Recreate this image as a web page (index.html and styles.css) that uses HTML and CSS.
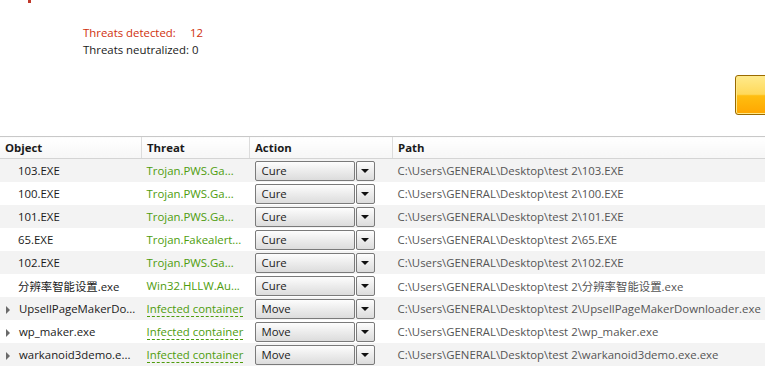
FILE: index.html
```html
<!DOCTYPE html>
<html lang="en">
<head>
    <meta charset="UTF-8">
    <meta name="viewport" content="width=device-width, initial-scale=1.0">
    <title>Scan Results</title>
    <link rel="stylesheet" href="styles.css">
</head>
<body>
    <div class="top">
        <div class="mark"></div>
        <div class="summary">
            <div class="stat alert"><span class="label">Threats detected:</span><span>12</span></div>
            <div class="stat"><span class="label">Threats neutralized:</span><span>0</span></div>
        </div>
        <div class="toolbar">
            <div class="big-button"></div>
        </div>
    </div>

    <table class="results">
        <thead>
            <tr>
                <th class="col-object">Object</th>
                <th class="col-threat">Threat</th>
                <th class="col-action">Action</th>
                <th class="col-path">Path</th>
            </tr>
        </thead>
        <tbody>
            <tr>
                <td class="obj">103.EXE</td>
                <td class="threat">Trojan.PWS.Ga...</td>
                <td><div class="combo"><span class="combo-value">Cure</span><span class="combo-arrow"></span></div></td>
                <td class="path">C:\Users\GENERAL\Desktop\test 2\103.EXE</td>
            </tr>
            <tr>
                <td class="obj">100.EXE</td>
                <td class="threat">Trojan.PWS.Ga...</td>
                <td><div class="combo"><span class="combo-value">Cure</span><span class="combo-arrow"></span></div></td>
                <td class="path">C:\Users\GENERAL\Desktop\test 2\100.EXE</td>
            </tr>
            <tr>
                <td class="obj">101.EXE</td>
                <td class="threat">Trojan.PWS.Ga...</td>
                <td><div class="combo"><span class="combo-value">Cure</span><span class="combo-arrow"></span></div></td>
                <td class="path">C:\Users\GENERAL\Desktop\test 2\101.EXE</td>
            </tr>
            <tr>
                <td class="obj">65.EXE</td>
                <td class="threat">Trojan.Fakealert...</td>
                <td><div class="combo"><span class="combo-value">Cure</span><span class="combo-arrow"></span></div></td>
                <td class="path">C:\Users\GENERAL\Desktop\test 2\65.EXE</td>
            </tr>
            <tr>
                <td class="obj">102.EXE</td>
                <td class="threat">Trojan.PWS.Ga...</td>
                <td><div class="combo"><span class="combo-value">Cure</span><span class="combo-arrow"></span></div></td>
                <td class="path">C:\Users\GENERAL\Desktop\test 2\102.EXE</td>
            </tr>
            <tr>
                <td class="obj">分辨率智能设置.exe</td>
                <td class="threat">Win32.HLLW.Au...</td>
                <td><div class="combo"><span class="combo-value">Cure</span><span class="combo-arrow"></span></div></td>
                <td class="path">C:\Users\GENERAL\Desktop\test 2\分辨率智能设置.exe</td>
            </tr>
            <tr>
                <td class="obj"><span class="expander"></span>UpsellPageMakerDo...</td>
                <td class="threat"><span class="container">Infected container</span></td>
                <td><div class="combo"><span class="combo-value">Move</span><span class="combo-arrow"></span></div></td>
                <td class="path">C:\Users\GENERAL\Desktop\test 2\UpsellPageMakerDownloader.exe</td>
            </tr>
            <tr>
                <td class="obj"><span class="expander"></span>wp_maker.exe</td>
                <td class="threat"><span class="container">Infected container</span></td>
                <td><div class="combo"><span class="combo-value">Move</span><span class="combo-arrow"></span></div></td>
                <td class="path">C:\Users\GENERAL\Desktop\test 2\wp_maker.exe</td>
            </tr>
            <tr>
                <td class="obj"><span class="expander"></span>warkanoid3demo.e...</td>
                <td class="threat"><span class="container">Infected container</span></td>
                <td><div class="combo"><span class="combo-value">Move</span><span class="combo-arrow"></span></div></td>
                <td class="path">C:\Users\GENERAL\Desktop\test 2\warkanoid3demo.exe.exe</td>
            </tr>
        </tbody>
    </table>
</body>
</html>
```

FILE: styles.css
```css
body { margin: 0; font-family: "Open Sans", "Noto Sans CJK SC", sans-serif; font-size: 11.4px; color: #1a1a1a; background: #fff; overflow: hidden; }

.top { height: 136px; }
.mark { width: 3px; height: 3px; margin-left: 28px; background: #c0392b; }
.summary { padding: 21px 0 0 83px; }
.stat { display: flex; gap: 3px; height: 17px; line-height: 17px; white-space: nowrap; }
.stat .label { min-width: 104px; }
.alert { color: #d0300c; }
.toolbar { display: flex; justify-content: flex-end; margin-top: 17px; }
.big-button { width: 40px; height: 38px; margin-right: -12px; border: 1px solid #9a6a00; border-radius: 3px; box-shadow: inset 0 0 0 1px #ffe98a; background: linear-gradient(#ffea8c 0%, #ffd95a 48%, #ffbe10 52%, #ffa600 100%); }

.results { border-collapse: collapse; table-layout: fixed; width: 765px; }
.results th { height: 21px; padding: 0 5px; text-align: left; font-weight: bold; border-top: 1px solid #c8c8c8; border-bottom: 1px solid #d4d4d4; border-left: 1px solid #dcdcdc; background: linear-gradient(#ffffff, #f6f6f6); }
.results th:first-child { border-left: none; }
.col-object { width: 131px; }
.col-threat { width: 97px; }
.col-action { width: 132px; }
.col-path { width: auto; }
.results td { height: 23px; padding: 0 5px; white-space: nowrap; overflow: hidden; }
.results tbody tr:nth-child(odd) { background: #f3f3f3; }
.obj::before { content: ""; display: inline-block; width: 13px; }
.expander { display: inline-block; width: 0; height: 0; margin: 0 9px 0 -12px; border-left: 4px solid #6a6a6a; border-top: 4px solid transparent; border-bottom: 4px solid transparent; vertical-align: -1px; }
.threat { color: #4e9c0c; }
.container { border-bottom: 1px dashed #4e9c0c; }
.path { color: #555; }

.combo { display: flex; height: 20px; }
.combo-value { width: 92px; padding-left: 6px; line-height: 18px; color: #222; border: 1px solid #7a7a7a; border-radius: 2px; background: linear-gradient(#fdfdfd, #ececec 50%, #dcdcdc); }
.combo-arrow { width: 17px; margin-left: 1px; border: 1px solid #7a7a7a; border-radius: 2px; background: linear-gradient(#fdfdfd, #ececec 50%, #dcdcdc); display: flex; align-items: center; justify-content: center; }
.combo-arrow::after { content: ""; border-top: 4px solid #111; border-left: 4px solid transparent; border-right: 4px solid transparent; }
```
